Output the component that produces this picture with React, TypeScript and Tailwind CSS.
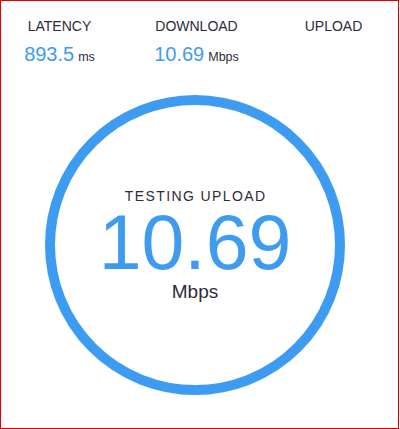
import React from "react";

const font = { fontFamily: '"Liberation Sans", Arial, sans-serif' };

function Stat({ label, value, unit }: { label: string; value?: string; unit?: string }) {
  return (
    <div className="flex flex-col items-center">
      <div className="text-[14px] leading-[16px] text-[#2c2c3a]">{label}</div>
      <div className="mt-[8px] flex h-[24px] items-baseline">
        {value && (
          <>
            <span className="text-[20px] leading-[24px] text-[#3d9cf0]">{value}</span>
            <span className="ml-[4px] text-[12.5px] leading-[24px] text-[#2c2c3a]">{unit}</span>
          </>
        )}
      </div>
    </div>
  );
}

export default function App() {
  return (
    <div
      style={font}
      className="box-border h-[429px] w-[399px] overflow-hidden border border-[#e00000] bg-white"
    >
      <div className="ml-[-10px] grid grid-cols-[137px_137px_137px] pt-[17px]">
        <Stat label="LATENCY" value="893.5" unit="ms" />
        <Stat label="DOWNLOAD" value="10.69" unit="Mbps" />
        <Stat label="UPLOAD" />
      </div>
      <div className="ml-[44px] mt-[29px] box-border flex h-[300px] w-[300px] flex-col items-center rounded-full border-[10px] border-[#3d9cf2] pt-[83px]">
        <div className="pl-[1.4px] text-[14px] leading-[16px] tracking-[1.4px] text-[#2c2c3a]">
          TESTING UPLOAD
        </div>
        <div className="text-[77px] leading-[76px] text-[#3d9cf0]">10.69</div>
        <div className="mt-[1px] text-[19px] leading-[22px] text-[#2c2c3a]">Mbps</div>
      </div>
    </div>
  );
}
